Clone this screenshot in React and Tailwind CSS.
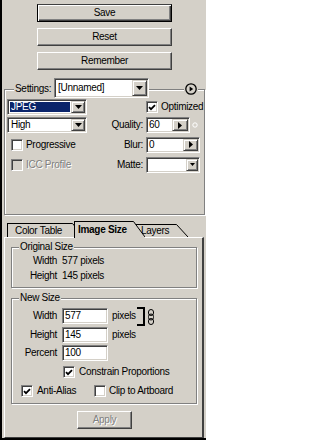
import React from "react";

const sunken =
  "border border-t-[#808080] border-l-[#808080] border-b-white border-r-white shadow-[inset_1px_1px_0_#404040,inset_-1px_-1px_0_#d4d0c8]";
const raised =
  "border border-t-white border-l-white border-b-[#404040] border-r-[#404040] shadow-[inset_-1px_-1px_0_#808080]";
const raisedSmall =
  "border border-t-[#d4d0c8] border-l-[#d4d0c8] border-b-[#404040] border-r-[#404040] shadow-[inset_1px_1px_0_#fff,inset_-1px_-1px_0_#808080]";
const etched = "border border-[#808080] shadow-[1px_1px_0_#fff,inset_1px_1px_0_#fff]";

function DownTri() {
  return (
    <svg width="7" height="4" viewBox="0 0 7 4" className="block">
      <path d="M0 0H7L3.5 4Z" fill="#000" />
    </svg>
  );
}
function RightTri() {
  return (
    <svg width="4" height="7" viewBox="0 0 4 7" className="block">
      <path d="M0 0V7L4 3.5Z" fill="#000" />
    </svg>
  );
}

function ArrowBtn({ className = "", children }) {
  return (
    <div className={`${raisedSmall} bg-[#d4d0c8] flex items-center justify-center shrink-0 h-full ${className}`}>
      {children}
    </div>
  );
}

function Check({ checked, disabled }) {
  return (
    <div
      className={`${sunken} w-[12px] h-[12px] shrink-0 flex items-center justify-center ${
        disabled ? "bg-[#d4d0c8]" : "bg-white"
      }`}
    >
      {checked && (
        <svg width="8" height="7" viewBox="0 0 8 7" className="block">
          <path d="M1 3.2L3 5.2L7 1.2" stroke="#000" strokeWidth="1.8" fill="none" />
        </svg>
      )}
    </div>
  );
}

function Btn({ children, def, disabled, className = "" }) {
  return (
    <div
      className={`h-[18px] flex items-center justify-center ${
        def ? "border border-black border-t-[#404040] shadow-[inset_1px_1px_0_#fff,inset_-1px_-1px_0_#404040,inset_-2px_-2px_0_#808080]" : raised
      } ${disabled ? "text-[#808080] [text-shadow:1px_1px_0_#fff]" : ""} ${className}`}
    >
      {children}
    </div>
  );
}

function Field({ className = "", children }) {
  return <div className={`${sunken} bg-white h-[16px] p-[1px] flex items-stretch ${className}`}>{children}</div>;
}

function Tab({ label, h, bodyW, pl, active, className = "" }) {
  return (
    <div className={`flex shrink-0 ${className}`} style={{ height: h }}>
      <div
        className={`border-t border-l border-black bg-[#d4d0c8] flex items-center whitespace-nowrap ${
          active ? "font-bold" : ""
        }`}
        style={{ width: bodyW, paddingLeft: pl }}
      >
        {label}
      </div>
      <svg width="12" height={h} viewBox={`0 0 12 ${h}`} className="block shrink-0">
        <path d={`M0 0H0.5L12 ${h}H0Z`} fill="#d4d0c8" />
        <path d={`M0 0.5H0.5L12 ${active ? h - 1 : h}`} stroke="#000" fill="none" />
      </svg>
    </div>
  );
}

export default function App() {
  return (
    <div className="w-[206px] h-[440px] bg-[#d4d0c8] border-l-2 border-b-2 border-black flex flex-col overflow-hidden text-black text-[10px] leading-none tracking-[-0.3px] font-['Liberation_Sans',Arial,sans-serif] select-none">
      {/* Top buttons */}
      <div className="flex flex-col gap-[6px] pt-[4px] pl-[35px]">
        <Btn def className="w-[135px]">Save</Btn>
        <Btn className="w-[135px]">Reset</Btn>
        <Btn className="w-[135px]">Remember</Btn>
      </div>

      {/* Settings group */}
      <fieldset className={`ml-[2px] mt-[8px] w-[201px] h-[137px] min-w-0 p-0 shrink-0 ${etched}`}>
        <legend className="ml-[9px] pl-[1px] w-[184px] h-[23px] flex items-start bg-[#d4d0c8]">
          <span className="w-[39px] h-[20px] mt-[1px] flex items-center whitespace-nowrap">Settings:</span>
          <div className={`${sunken} bg-white w-[95px] h-[20px] p-[1px] flex items-stretch`}>
            <div className="flex-1 flex items-center pl-[2px] whitespace-nowrap">[Unnamed]</div>
            <ArrowBtn className="w-[15px]">
              <DownTri />
            </ArrowBtn>
          </div>
          <div className="flex-1 mt-[11px] h-[2px] border-t border-b border-t-[#808080] border-b-white" />
          <div className="mt-[5px]">
            <svg width="14" height="12" viewBox="0 0 14 12" className="block">
              <circle cx="7" cy="6" r="5.2" fill="#d4d0c8" stroke="#000" strokeWidth="1.3" />
              <path d="M5.6 3.4V8.6L9.2 6Z" fill="#000" />
            </svg>
          </div>
        </legend>

        <div className="grid grid-cols-[80px_56px_3px_54px] grid-rows-[17px_19px_21px_19px] -mt-[3px] ml-[2px]">
          {/* row 1 */}
          <Field className="col-start-1 row-start-1 self-center w-[80px]">
            <div className="flex-1 m-[1px] bg-[#0a246a] text-white flex items-center pl-[1px]">JPEG</div>
            <ArrowBtn className="w-[14px]">
              <DownTri />
            </ArrowBtn>
          </Field>
          <div className="col-start-4 row-start-1 self-end mb-[2px] flex items-center gap-[3px] whitespace-nowrap">
            <Check checked />
            <span>Optimized</span>
          </div>

          {/* row 2 */}
          <Field className="col-start-1 row-start-2 self-center w-[80px]">
            <div className="flex-1 flex items-center pl-[2px]">High</div>
            <ArrowBtn className="w-[14px]">
              <DownTri />
            </ArrowBtn>
          </Field>
          <div className="col-start-2 row-start-2 self-end mb-[1px] h-[16px] flex items-center justify-end whitespace-nowrap">
            Quality:
          </div>
          <div className="col-start-4 row-start-2 self-end mb-[1px] flex items-center">
            <Field className="w-[44px]">
              <div className="flex-1 flex items-center pl-[1px]">60</div>
              <ArrowBtn className="w-[16px]">
                <RightTri />
              </ArrowBtn>
            </Field>
            <div className="w-[10px] h-[16px] flex items-center justify-center">
              <svg width="6" height="6" viewBox="0 0 6 6" className="block">
                <circle cx="3" cy="3" r="2.2" fill="none" stroke="#fff" strokeWidth="1" />
              </svg>
            </div>
          </div>

          {/* row 3 */}
          <div className="col-start-1 row-start-3 self-center ml-[4px] flex items-center gap-[3px] whitespace-nowrap">
            <Check />
            <span>Progressive</span>
          </div>
          <div className="col-start-2 row-start-3 self-center h-[16px] flex items-center justify-end">Blur:</div>
          <Field className="col-start-4 row-start-3 self-center w-[54px]">
            <div className="flex-1 flex items-center pl-[1px]">0</div>
            <ArrowBtn className="w-[15px]">
              <RightTri />
            </ArrowBtn>
          </Field>

          {/* row 4 */}
          <div className="col-start-1 row-start-4 self-center ml-[4px] flex items-center gap-[3px] whitespace-nowrap text-[#808080] [text-shadow:1px_1px_0_#fff]">
            <Check disabled />
            <span>ICC Profile</span>
          </div>
          <div className="col-start-2 row-start-4 self-center h-[16px] flex items-center justify-end">Matte:</div>
          <Field className="col-start-4 row-start-4 self-center w-[54px]">
            <div className="flex-1" />
            <ArrowBtn className="w-[12px]">
              <svg width="5" height="3" viewBox="0 0 5 3" className="block">
                <path d="M0 0H5L2.5 3Z" fill="#000" />
              </svg>
            </ArrowBtn>
          </Field>
        </div>
      </fieldset>

      {/* Tabs */}
      <div className="flex items-end ml-[5px] mt-[6px] h-[16px] shrink-0">
        <Tab label="Color Table" h={14} bodyW={65} pl={7} />
        <Tab label="Image Size" h={17} bodyW={59} pl={3} active className="relative z-10 -ml-[10px] -mb-[1px]" />
        <Tab label="Layers" h={13} bodyW={42} pl={6} className="-ml-[11px]" />
      </div>

      {/* Tab panel */}
      <div className="ml-[2px] w-[200px] flex-1 flex flex-col border-t border-l border-r-2 border-b border-t-white border-l-white border-r-[#404040] border-b-[#404040]">
        {/* Original Size */}
        <fieldset className={`ml-[6px] mt-[3px] w-[186px] h-[47px] min-w-0 p-0 shrink-0 ${etched}`}>
          <legend className="ml-[7px] px-[1px] h-[12px] flex items-center bg-[#d4d0c8]">Original Size</legend>
          <div className="grid grid-cols-[45px_auto] gap-x-[5px] grid-rows-[15px_15px] items-center">
            <span className="text-right">Width</span>
            <span>577 pixels</span>
            <span className="text-right">Height</span>
            <span>145 pixels</span>
          </div>
        </fieldset>

        {/* New Size */}
        <fieldset className={`ml-[6px] mt-[4px] w-[186px] h-[112px] min-w-0 p-0 shrink-0 ${etched}`}>
          <legend className="ml-[7px] px-[1px] h-[12px] flex items-center bg-[#d4d0c8]">New Size</legend>
          <div className="mt-[4px] grid grid-cols-[50px_50px_25px_11px_auto] grid-rows-[19px_18px_16px]">
            <div className="col-start-1 row-start-1 h-[16px] flex items-center justify-end pr-[5px]">Width</div>
            <Field className="col-start-2 row-start-1 w-[46px]">
              <div className="flex items-center pl-[1px]">577</div>
            </Field>
            <div className="col-start-3 row-start-1 h-[16px] flex items-center">pixels</div>
            <div className="col-start-4 row-start-1 row-span-2 -mt-[1px]">
              <svg width="8" height="19" viewBox="0 0 8 19" className="block">
                <path d="M0 1H7V18H0" stroke="#000" strokeWidth="2" fill="none" />
              </svg>
            </div>
            <div className="col-start-5 row-start-1 row-span-2 mt-[1px]">
              <svg width="6" height="16" viewBox="0 0 6 16" className="block">
                <rect x="0.5" y="0.5" width="5" height="6" rx="2.5" stroke="#000" fill="none" />
                <rect x="0.5" y="5" width="5" height="6" rx="2.5" stroke="#000" fill="none" />
                <rect x="0.5" y="9.5" width="5" height="6" rx="2.5" stroke="#000" fill="none" />
              </svg>
            </div>

            <div className="col-start-1 row-start-2 h-[16px] flex items-center justify-end pr-[5px]">Height</div>
            <Field className="col-start-2 row-start-2 w-[46px]">
              <div className="flex items-center pl-[1px]">145</div>
            </Field>
            <div className="col-start-3 row-start-2 h-[16px] flex items-center">pixels</div>

            <div className="col-start-1 row-start-3 h-[16px] flex items-center justify-end pr-[5px]">Percent</div>
            <Field className="col-start-2 row-start-3 w-[46px]">
              <div className="flex items-center pl-[1px]">100</div>
            </Field>
          </div>

          <div className="ml-[51px] mt-[5px] flex items-center gap-[4px] whitespace-nowrap">
            <Check checked />
            <span>Constrain Proportions</span>
          </div>

          <div className="ml-[9px] mt-[7px] flex items-center whitespace-nowrap">
            <div className="w-[73px] flex items-center gap-[4px]">
              <Check checked />
              <span>Anti-Alias</span>
            </div>
            <div className="flex items-center gap-[3px]">
              <Check />
              <span>Clip to Artboard</span>
            </div>
          </div>
        </fieldset>

        <Btn disabled className="ml-[72px] mt-[7px] w-[55px] shrink-0">
          Apply
        </Btn>
      </div>
    </div>
  );
}
